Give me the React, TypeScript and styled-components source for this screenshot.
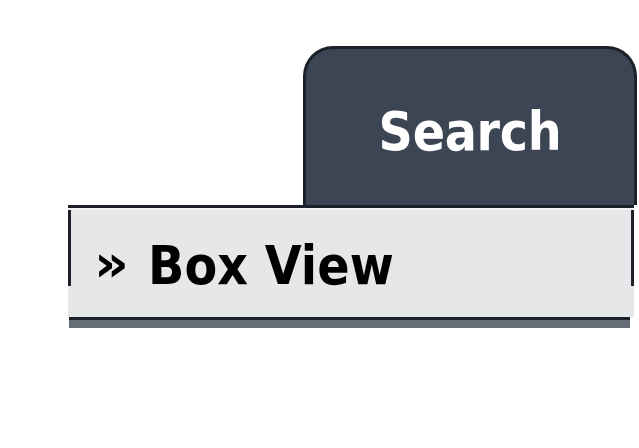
import React from "react"
import styled, { createGlobalStyle } from "styled-components"

const GlobalStyle = createGlobalStyle`
  html, body {
    margin: 0;
    padding: 0;
    background: #ffffff;
  }
  body {
    font-family: "DejaVu Sans Condensed", "DejaVu Sans", Verdana, sans-serif;
  }
`

const Page = styled.div`
  width: 639px;
  height: 448px;
  padding-top: 46px;
  box-sizing: border-box;
`

const TabRow = styled.div`
  display: flex;
  justify-content: flex-end;
  padding-right: 2px;
`

const Tab = styled.div`
  width: 334px;
  height: 159px;
  box-sizing: border-box;
  background: #3c4553;
  border: 3px solid #1b2029;
  border-bottom: none;
  border-radius: 30px 30px 0 0;
  padding-top: 55px;
  text-align: center;
  color: #ffffff;
  font-size: 53px;
  font-weight: 700;
  line-height: 55px;
  letter-spacing: -0.3px;
`

const Panel = styled.div`
  margin-left: 68px;
  width: 566px;
  height: 112px;
  box-sizing: border-box;
  border-top: 3px solid #1b2029;
  background:
    linear-gradient(#1b2029, #1b2029) left top / 3px 78px no-repeat,
    linear-gradient(#1b2029, #1b2029) right top / 3px 78px no-repeat,
    #e6e7e9;
  box-shadow: inset 0 2px 0 #f3f3f5;
  padding: 28px 0 0 26px;
`

const ViewLink = styled.div`
  display: flex;
  align-items: baseline;
  gap: 19px;
  color: #000000;
  font-size: 53px;
  font-weight: 700;
  line-height: 55px;
  letter-spacing: 0.1px;
`

const Arrow = styled.span`
  font-size: 60px;
  line-height: 55px;
  transform: scaleY(0.85);
`

const BottomBar = styled.div`
  margin-left: 69px;
  width: 561px;
  height: 11px;
  box-sizing: border-box;
  border-top: 3px solid #1b2029;
  background: #676d77;
`

const App = () => {
  return (
    <Page>
      <GlobalStyle />
      <TabRow>
        <Tab>Search</Tab>
      </TabRow>
      <Panel>
        <ViewLink>
          <Arrow>»</Arrow>
          Box View
        </ViewLink>
      </Panel>
      <BottomBar />
    </Page>
  )
}

export default App
